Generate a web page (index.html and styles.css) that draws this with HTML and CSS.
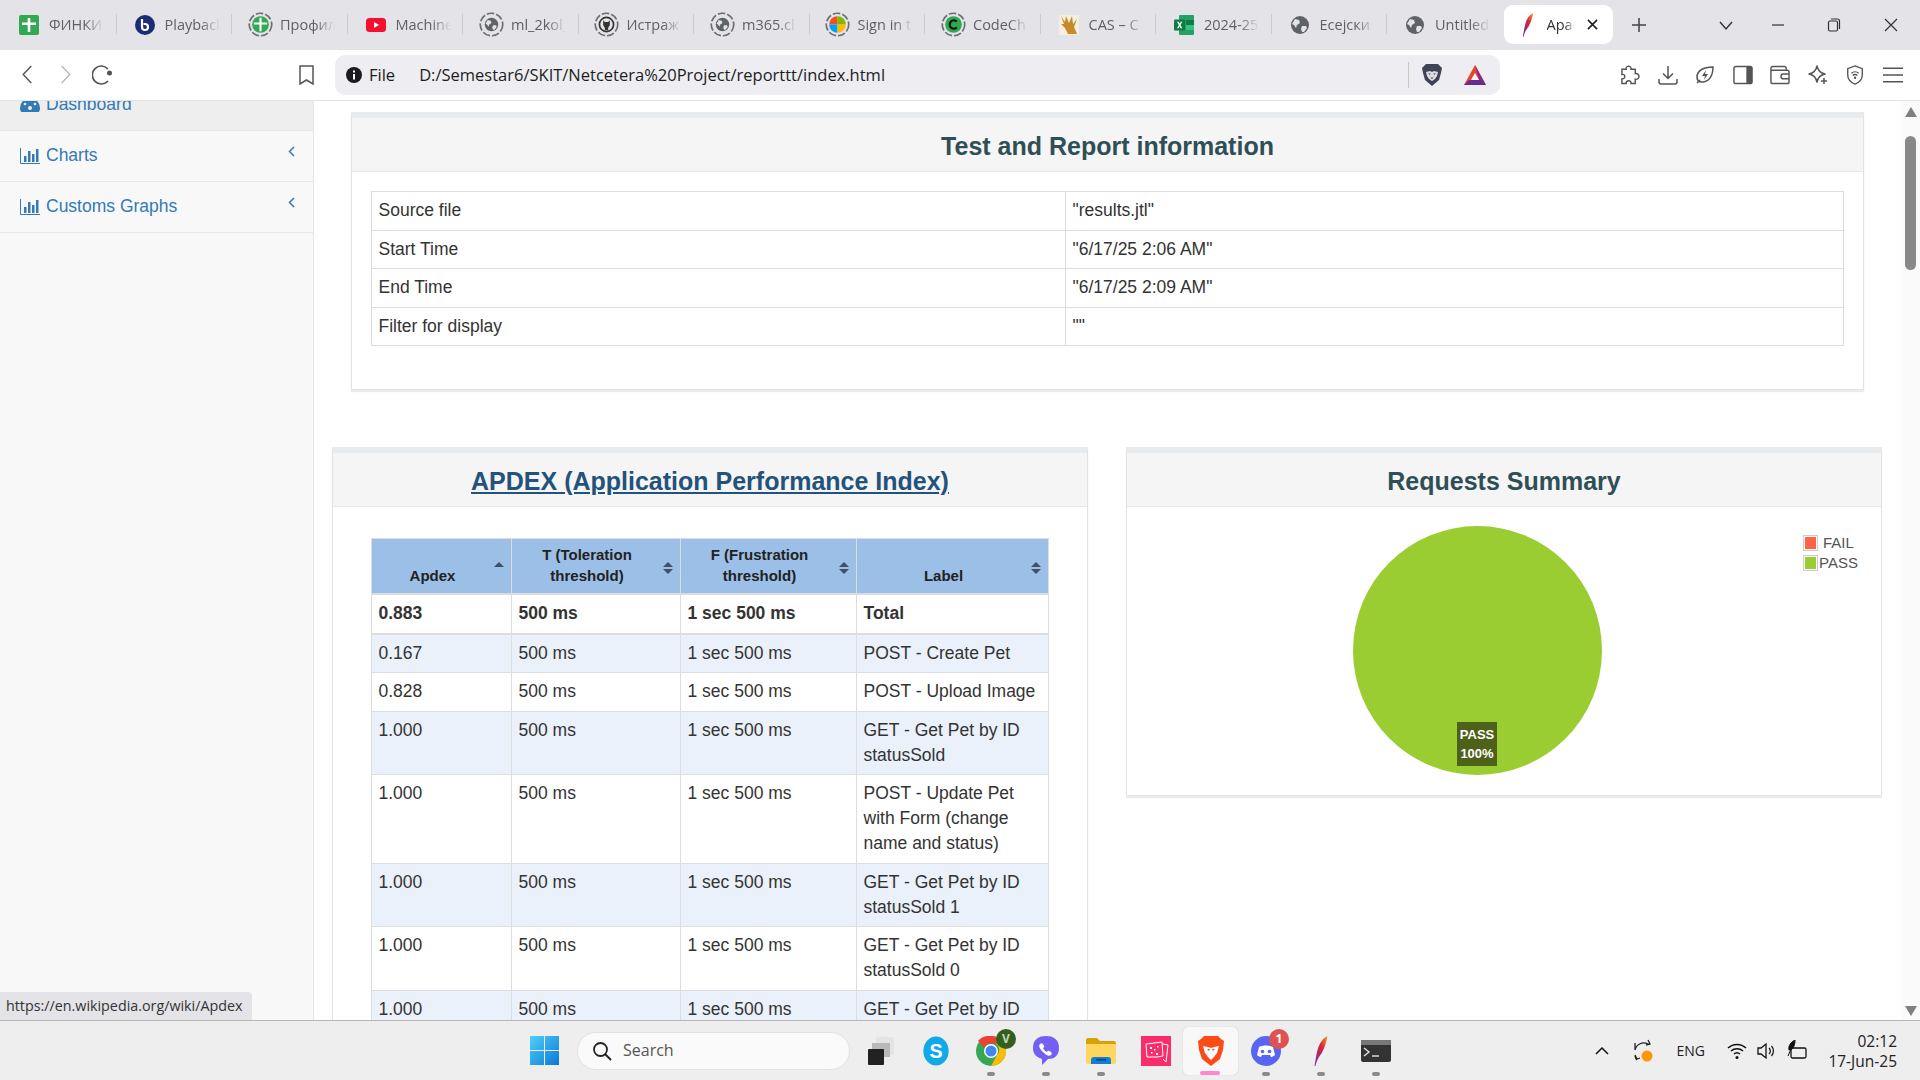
FILE: index.html
```html
<!DOCTYPE html>
<html lang="en">
  <head>
    <meta charset="UTF-8" />
    <title>Apache JMeter Dashboard</title>
    <link rel="stylesheet" href="styles.css">
  </head>

  <body>
    <!-- shared icons -->
    <svg class="defs" width="0" height="0">
      <symbol id="globe" viewBox="0 0 20 20">
        <circle cx="10" cy="10" r="9" fill="#5f6368"/>
        <path d="M5 4l4 1 1 3-3 2-1 3-2-3-2-1zM12 11l4 0 1 2-3 4-2 0-1-3z" fill="#e3e3e8"/>
      </symbol>
      <symbol id="ring" viewBox="0 0 30 30">
        <circle cx="15" cy="15" r="13.5" fill="none" stroke="#6d6d72" stroke-width="2" stroke-dasharray="9 2.5"/>
      </symbol>
      <symbol id="bars" viewBox="0 0 20 16">
        <path d="M.5 0v15.500h19.500" fill="none" stroke="#337ab7"/>
        <path d="M4 8h2.500v6H4zM8 3h2.500v11H8zM12 6h2.500v8H12zM16 1h2.500v13H16z" fill="#337ab7"/>
      </symbol>
      <symbol id="feather" viewBox="0 0 14 30">
        <defs>
          <linearGradient id="feathergrad" x1="1" y1="0" x2="0" y2="1">
            <stop offset="0" stop-color="#f7a02b"/>
            <stop offset=".4" stop-color="#d6263c"/>
            <stop offset=".8" stop-color="#8c2a86"/>
          </linearGradient>
        </defs>
        <path d="M13.500 0C9 2 5.500 7 3.500 14 2.500 18 1.500 24 .5 30l.8 0C2.500 26 3.500 23 5 21 9 16 12 9 13.500 0z" fill="url(#feathergrad)"/>
      </symbol>
    </svg>

    <header class="tabstrip">
      <div class="tab">
        <svg class="favicon" viewBox="0 0 20 20"><rect width="20" height="20" rx="2" fill="#33a852"/><path d="M8.700 3h2.600v4.500H17V10h-5.700v7H8.700v-7H3V7.500h5.700z" fill="#fff"/></svg>
        <span class="tab-title">ФИНКИ</span>
      </div>
      <div class="tab">
        <svg class="favicon" viewBox="0 0 20 20"><circle cx="10" cy="10" r="10" fill="#1c2b78"/><path d="M7 4v8a3 3 0 1 0 3-3H8.500" fill="none" stroke="#fff" stroke-width="2.200"/></svg>
        <span class="tab-title">Playback</span>
      </div>
      <div class="tab">
        <svg class="favicon favicon-ring" viewBox="0 0 30 30"><use href="#ring"/><circle cx="15" cy="15" r="10" fill="#33a852"/><path d="M13.700 7h2.600v5.500H23V15h-6.700v8h-2.600v-8H7v-2.500h6.700z" fill="#fff"/></svg>
        <span class="tab-title">Профил</span>
      </div>
      <div class="tab">
        <svg class="favicon" viewBox="0 0 20 20"><rect y="3" width="20" height="14" rx="3.500" fill="#f5102f"/><path d="M8 7l5 3-5 3z" fill="#fff"/></svg>
        <span class="tab-title">Machine</span>
      </div>
      <div class="tab">
        <svg class="favicon favicon-ring" viewBox="0 0 30 30"><use href="#ring"/><use href="#globe" x="6" y="6" width="18" height="18"/></svg>
        <span class="tab-title">ml_2kol_</span>
      </div>
      <div class="tab">
        <svg class="favicon favicon-ring" viewBox="0 0 30 30"><use href="#ring"/><circle cx="15" cy="15" r="8.500" fill="none" stroke="#333" stroke-width="2"/><path d="M11 10l2 2h4l2-2v6l-2 3v3h-4v-3l-2-3z" fill="#333"/></svg>
        <span class="tab-title">Истраж</span>
      </div>
      <div class="tab">
        <svg class="favicon favicon-ring" viewBox="0 0 30 30"><use href="#ring"/><use href="#globe" x="6" y="6" width="18" height="18"/></svg>
        <span class="tab-title">m365.cl</span>
      </div>
      <div class="tab">
        <svg class="favicon favicon-ring" viewBox="0 0 30 30"><use href="#ring"/><path d="M15 5v10H5a10 10 0 0 1 10-10z" fill="#f25022"/><path d="M15 5a10 10 0 0 1 10 10H15z" fill="#7fba00"/><path d="M15 25V15H5a10 10 0 0 0 10 10z" fill="#00a4ef"/><path d="M15 25a10 10 0 0 0 10-10H15z" fill="#ffb900"/></svg>
        <span class="tab-title">Sign in t</span>
      </div>
      <div class="tab">
        <svg class="favicon favicon-ring" viewBox="0 0 30 30"><use href="#ring"/><circle cx="15" cy="15" r="10" fill="#2fa84f"/><path d="M19 11.500a5 5 0 1 0 0 7" fill="none" stroke="#111" stroke-width="2.500"/></svg>
        <span class="tab-title">CodeCh</span>
      </div>
      <div class="tab">
        <svg class="favicon" viewBox="0 0 20 20"><rect width="20" height="20" fill="#f6efe0"/><path d="M2 1l4 6 1-6 3 7 3-7 1 8 4-5-3 8 3 7H9L6 13 2 9l3 0z" fill="#c58a2c"/></svg>
        <span class="tab-title">CAS – C</span>
      </div>
      <div class="tab">
        <svg class="favicon" viewBox="0 0 20 20"><rect x="5" y="0" width="15" height="20" rx="1" fill="#21a366"/><rect x="12" y="5" width="8" height="5" fill="#107c41"/><rect x="12" y="10" width="8" height="5" fill="#33c481"/><rect y="4.500" width="11" height="11" rx="1" fill="#0f7b40"/><path d="M3 6.800h1.700l1 2 1-2h1.600L6.500 10l1.800 3.200H6.600l-1-2-1 2H3L4.800 10z" fill="#fff"/></svg>
        <span class="tab-title">2024-25</span>
      </div>
      <div class="tab">
        <svg class="favicon" viewBox="0 0 20 20"><use href="#globe"/></svg>
        <span class="tab-title">Есејски</span>
      </div>
      <div class="tab">
        <svg class="favicon" viewBox="0 0 20 20"><use href="#globe"/></svg>
        <span class="tab-title">Untitled</span>
      </div>
      <div class="tab tab-active">
        <svg class="favicon feather-favicon" viewBox="0 0 14 30"><use href="#feather"/></svg>
        <span class="tab-title">Apache</span>
        <svg class="tab-close" viewBox="0 0 12 12"><path d="M1 1l10 10M11 1L1 11" stroke="#222" stroke-width="1.800"/></svg>
      </div>
      <svg class="new-tab" viewBox="0 0 14 14"><path d="M7 0v14M0 7h14" stroke="#444" stroke-width="1.500"/></svg>
      <div class="window-controls">
        <svg viewBox="0 0 14 14" class="win-btn"><path d="M1 4l6 7 6-7" fill="none" stroke="#333" stroke-width="1.400"/></svg>
        <svg viewBox="0 0 14 14" class="win-btn"><path d="M1 7h12" stroke="#333" stroke-width="1.200"/></svg>
        <svg viewBox="0 0 14 14" class="win-btn win-restore"><rect x="1.500" y="3" width="9" height="10" rx="1.500" fill="none" stroke="#333" stroke-width="1.200"/><path d="M4 1h6.500A2 2 0 0 1 12.500 3v8" fill="none" stroke="#333" stroke-width="1.200"/></svg>
        <svg viewBox="0 0 14 14" class="win-btn win-close"><path d="M1 1l12 12M13 1L1 13" stroke="#333" stroke-width="1.200"/></svg>
      </div>
    </header>

    <nav class="toolbar">
      <div class="nav-buttons">
        <svg class="nav-back" viewBox="0 0 10 20"><path d="M9.500 1L1 10l8.500 9" fill="none" stroke="#555" stroke-width="1.500"/></svg>
        <svg class="nav-forward" viewBox="0 0 10 20"><path d="M.5 1L9 10 .5 19" fill="none" stroke="#bbb" stroke-width="1.500"/></svg>
        <svg class="nav-reload" viewBox="0 0 21 20"><path d="M16 4A9 9 0 1 0 16 16" fill="none" stroke="#555" stroke-width="1.700"/><circle cx="17.500" cy="8" r="2.500" fill="#555"/></svg>
        <svg class="nav-bookmark" viewBox="0 0 15 20"><path d="M1 1h13v18l-6.500-4L1 19z" fill="none" stroke="#555" stroke-width="1.500"/></svg>
      </div>
      <div class="address-bar">
        <svg class="info-icon" viewBox="0 0 16 16"><circle cx="8" cy="8" r="8" fill="#1b1b1f"/><path d="M7 7h2v5.500H7zM7 3.500h2v2H7z" fill="#fff"/></svg>
        <span class="scheme">File</span>
        <span class="url">D:/Semestar6/SKIT/Netcetera%20Project/reporttt/index.html</span>
        <span class="address-sep"></span>
        <svg class="brave-shield" viewBox="0 0 20 22"><path d="M4 0h12l2 2 2 2-1 5-2 7-7 6-7-6-2-7L0 4l2-2z" fill="#3f4355"/><path d="M4 8l4-1 2 1 2-1 4 1-1 4-2 3-3 2-3-2-2-3z" fill="#dcdce2"/><path d="M6 9.500h2.500L8 11zM11.500 9.500H14L12 11zM8.500 13.500h3L10 15z" fill="#3f4355"/></svg>
        <svg class="bat-icon" viewBox="0 0 22 20"><path d="M11 0l11 20H0z" fill="#e8452a"/><path d="M11 0l11 20H11l4-5z" fill="#8a2a8a"/><path d="M0 20l5-5h12l5 5z" fill="#662d91"/><path d="M11 8l4 7H7z" fill="#fff"/></svg>
      </div>
      <div class="extensions">
        <svg viewBox="0 0 21 20"><path d="M8 1c2-1 4 1 3.500 3H16v4.500c2-.5 4 1 4 3s-2 3.500-4 3V19h-4.500c.5-2-1-3-2.500-3s-3 1-2.500 3H2v-5c2 .5 3-1 3-2.500S4 9 2 9.500V4h4.500C6 3 6.500 1.500 8 1z" fill="none" stroke="#555" stroke-width="1.500"/></svg>
        <svg viewBox="0 0 20 20"><path d="M10 1v12M5 8.500l5 5 5-5M1 14v3a2 2 0 0 0 2 2h14a2 2 0 0 0 2-2v-3" fill="none" stroke="#555" stroke-width="1.500"/></svg>
        <svg viewBox="0 0 20 20"><path d="M18 2C8 2 2 6 2 12c0 3 2 5 5 5 7 0 11-6 11-15zM2 18l3-3" fill="none" stroke="#555" stroke-width="1.500"/><path d="M11 5l-4 6h3l-1 4 4-6h-3z" fill="#555"/></svg>
        <svg viewBox="0 0 21 20"><rect x="1" y="1" width="19" height="18" rx="2" fill="none" stroke="#555" stroke-width="1.500"/><rect x="14" y="1" width="6" height="18" fill="#555"/></svg>
        <svg viewBox="0 0 21 20"><path d="M17 5V3a2 2 0 0 0-2-2H3a2 2 0 0 0-2 2v14a2 2 0 0 0 2 2h15a2 2 0 0 0 2-2V7a2 2 0 0 0-2-2H1M20 9h-6a2.500 2.500 0 0 0 0 5h6" fill="none" stroke="#555" stroke-width="1.500"/></svg>
        <svg viewBox="0 0 20 20"><path d="M9 1c1 5 3 7 8 8-5 1-7 3-8 8-1-5-3-7-8-8 5-1 7-3 8-8z" fill="none" stroke="#555" stroke-width="1.500" stroke-linejoin="round"/><path d="M16 13v6M13 16h6" stroke="#555" stroke-width="1.500"/></svg>
        <svg viewBox="0 0 20 22"><path d="M10 1l8 3v7c0 5-3 8-8 10-5-2-8-5-8-10V4z" fill="none" stroke="#555" stroke-width="1.500"/><path d="M6 9a6 6 0 0 1 8 0M7.500 11.500a3.500 3.500 0 0 1 5 0" fill="none" stroke="#555" stroke-width="1.400"/><circle cx="10" cy="14" r="1.300" fill="#555"/></svg>
        <svg viewBox="0 0 21 16"><path d="M0 1h21M0 8h21M0 15h21" stroke="#555" stroke-width="1.500"/></svg>
      </div>
    </nav>

    <div class="viewport">
      <aside class="sidebar">
        <ul class="side-menu">
          <li class="side-item side-item-active">
            <svg class="side-icon" viewBox="0 0 20 16"><path d="M10 1a10 10 0 0 0-10 10c0 2 .5 3.500 1.500 4h17c1-.5 1.500-2 1.500-4A10 10 0 0 0 10 1z" fill="#337ab7"/><circle cx="10" cy="11" r="2" fill="#eee"/><circle cx="5" cy="7" r="1.300" fill="#eee"/><circle cx="15" cy="7" r="1.300" fill="#eee"/></svg>
            <a href="#">Dashboard</a>
          </li>
          <li class="side-item">
            <svg class="side-icon"><use href="#bars"/></svg>
            <a href="#">Charts</a>
            <svg class="side-arrow" viewBox="0 0 7 11"><path d="M6 1L1.500 5.500 6 10" fill="none" stroke="#337ab7" stroke-width="1.500"/></svg>
          </li>
          <li class="side-item">
            <svg class="side-icon"><use href="#bars"/></svg>
            <a href="#">Customs Graphs</a>
            <svg class="side-arrow" viewBox="0 0 7 11"><path d="M6 1L1.500 5.500 6 10" fill="none" stroke="#337ab7" stroke-width="1.500"/></svg>
          </li>
        </ul>
      </aside>

      <main class="page">
        <section class="panel panel-info">
          <div class="panel-heading"><h3>Test and Report information</h3></div>
          <div class="panel-body">
            <table class="table info-table">
              <colgroup><col class="col-key"><col></colgroup>
              <tbody>
                <tr><td>Source file</td><td>"results.jtl"</td></tr>
                <tr><td>Start Time</td><td>"6/17/25 2:06 AM"</td></tr>
                <tr><td>End Time</td><td>"6/17/25 2:09 AM"</td></tr>
                <tr><td>Filter for display</td><td>""</td></tr>
              </tbody>
            </table>
          </div>
        </section>

        <div class="panel-row">
          <section class="panel">
            <div class="panel-heading"><h3><a href="#">APDEX (Application Performance Index)</a></h3></div>
            <div class="panel-body apdex-body">
              <table class="table apdex-table">
                <colgroup><col class="col-apdex"><col class="col-t"><col class="col-f"><col></colgroup>
                <thead>
                  <tr>
                    <th class="sort-up">Apdex</th>
                    <th class="sort-both">T (Toleration threshold)</th>
                    <th class="sort-both">F (Frustration threshold)</th>
                    <th class="sort-both">Label</th>
                  </tr>
                </thead>
                <tbody>
                  <tr class="total-row"><td>0.883</td><td>500 ms</td><td>1 sec 500 ms</td><td>Total</td></tr>
                  <tr class="odd"><td>0.167</td><td>500 ms</td><td>1 sec 500 ms</td><td>POST - Create Pet</td></tr>
                  <tr><td>0.828</td><td>500 ms</td><td>1 sec 500 ms</td><td>POST - Upload Image</td></tr>
                  <tr class="odd"><td>1.000</td><td>500 ms</td><td>1 sec 500 ms</td><td>GET - Get Pet by ID statusSold</td></tr>
                  <tr><td>1.000</td><td>500 ms</td><td>1 sec 500 ms</td><td>POST - Update Pet with Form (change name and status)</td></tr>
                  <tr class="odd"><td>1.000</td><td>500 ms</td><td>1 sec 500 ms</td><td>GET - Get Pet by ID statusSold 1</td></tr>
                  <tr><td>1.000</td><td>500 ms</td><td>1 sec 500 ms</td><td>GET - Get Pet by ID statusSold 0</td></tr>
                  <tr class="odd"><td>1.000</td><td>500 ms</td><td>1 sec 500 ms</td><td>GET - Get Pet by ID</td></tr>
                </tbody>
              </table>
            </div>
          </section>

          <section class="panel">
            <div class="panel-heading"><h3>Requests Summary</h3></div>
            <div class="chart">
              <div class="pie">
                <div class="pie-label">PASS<br>100%</div>
              </div>
              <div class="legend">
                <span class="swatch swatch-fail"></span><span class="legend-text">FAIL</span>
                <span class="swatch swatch-pass"></span><span class="legend-text">PASS</span>
              </div>
            </div>
          </section>
        </div>
      </main>

      <div class="scrollbar">
        <span class="scroll-up"></span>
        <span class="scroll-thumb"></span>
        <span class="scroll-down"></span>
      </div>

      <div class="status-bubble">https://en.wikipedia.org/wiki/Apdex</div>
    </div>

    <footer class="taskbar">
      <svg class="win-logo" viewBox="0 0 29 29">
        <defs>
          <linearGradient id="wingrad" x1="0" y1="0" x2="1" y2="1">
            <stop offset="0" stop-color="#4fd0fb"/>
            <stop offset="1" stop-color="#0a78d6"/>
          </linearGradient>
        </defs>
        <path d="M0 0h14v14H0zM15 0h14v14H15zM0 15h14v14H0zM15 15h14v14H15z" fill="url(#wingrad)"/>
      </svg>
      <div class="search-box">
        <svg viewBox="0 0 20 20"><circle cx="8.500" cy="8.500" r="6.500" fill="none" stroke="#222" stroke-width="1.800"/><path d="M13 13l6 6" stroke="#222" stroke-width="2"/></svg>
        <span>Search</span>
      </div>
      <div class="task-apps">
        <div class="task-slot">
          <svg viewBox="0 0 30 30"><rect x="10" y="1" width="18" height="18" rx="2" fill="#e4e4e4"/><rect x="6" y="7" width="18" height="14" fill="#b9b9b9"/><rect x="2" y="13" width="16" height="16" rx="1" fill="#222"/></svg>
        </div>
        <div class="task-slot">
          <svg viewBox="0 0 28 32"><ellipse cx="14" cy="16" rx="13.500" ry="15.500" fill="#11a9e8"/><text x="14" y="23" text-anchor="middle" class="skype-s">S</text></svg>
        </div>
        <div class="task-slot is-open">
          <svg viewBox="0 0 30 30"><circle cx="15" cy="15" r="15" fill="#34a853"/><path d="M15 0a15 15 0 0 1 13 7.500H15A7.500 7.500 0 0 0 8 12L2 5A15 15 0 0 1 15 0z" fill="#ea4335"/><path d="M28 7.500A15 15 0 0 1 15 30l6-11a7.500 7.500 0 0 0-1-11.500z" fill="#fbbc04"/><circle cx="15" cy="15" r="7" fill="#fff"/><circle cx="15" cy="15" r="5.500" fill="#4285f4"/></svg>
          <span class="app-badge badge-green">V</span>
        </div>
        <div class="task-slot is-open">
          <svg viewBox="0 0 26 30"><path d="M13 0c7 0 13 3 13 12 0 8-5 11-11 11l-6 6v-6C3 21 0 18 0 12 0 3 6 0 13 0z" fill="#7360f2"/><path d="M7 8c1-1 2-1 3 0l1 2c.500 1 0 1.500-1 2 1 2 2 3 4 4 .5-1 1-1.500 2-1l2 1c1 1 1 2 0 3-2 2-5 0-8-3S5 10 7 8z" fill="#fff"/></svg>
        </div>
        <div class="task-slot is-open">
          <svg viewBox="0 0 30 26"><path d="M0 2a2 2 0 0 1 2-2h9l3 3h14a2 2 0 0 1 2 2v4H0z" fill="#d9a008"/><path d="M0 6h30v18a2 2 0 0 1-2 2H2a2 2 0 0 1-2-2z" fill="#ffd75e"/><path d="M5 26v-4a3 3 0 0 1 3-3h14a3 3 0 0 1 3 3v4z" fill="#0f7fd6"/><rect x="10" y="21" width="10" height="1.500" fill="#063e7a"/></svg>
        </div>
        <div class="task-slot">
          <svg viewBox="0 0 30 30"><rect width="30" height="30" fill="#f92d6a"/><path d="M5 8l16-2 1 14-6 1H6zM22 8l5 1-2 17-3-3" fill="none" stroke="#fff" stroke-width="1"/><path d="M9 11h2v2H9zM13 13h1.500v1.500H13zM10 16h1.500v1.500H10zM16 10h1.500v1.500H16zM15 17h2v2h-2z" fill="#fff"/></svg>
        </div>
        <div class="task-slot is-active">
          <svg viewBox="0 0 26 30"><path d="M6 0h14l3 3 3 2-1 9-3 9-9 7-9-7-3-9L0 5l3-2z" fill="#fb4b16"/><path d="M5 10l5 1 3 1 3-1 5-1-2 7-3 4-3 3-3-3-3-4z" fill="#fff"/><path d="M9 13h3l-1 2zM14 13h3l-2 2z" fill="#fb4b16"/></svg>
        </div>
        <div class="task-slot is-open">
          <svg viewBox="0 0 30 30"><circle cx="15" cy="15" r="15" fill="#5865f2"/><path d="M8 11c4-2 10-2 14 0l2 8c-2 1.500-3 2-4 2l-1-2H11l-1 2c-1 0-2-.5-4-2z" fill="#fff"/><circle cx="11.500" cy="15.500" r="1.800" fill="#5865f2"/><circle cx="18.500" cy="15.500" r="1.800" fill="#5865f2"/></svg>
          <span class="app-badge badge-red">1</span>
        </div>
        <div class="task-slot is-open">
          <svg class="task-feather" viewBox="0 0 14 30"><use href="#feather"/></svg>
        </div>
        <div class="task-slot is-open">
          <svg viewBox="0 0 30 22"><rect width="30" height="22" rx="2" fill="#333"/><rect width="30" height="5" fill="#777"/><path d="M3 8l5 4-5 4" fill="none" stroke="#ddd" stroke-width="1.500"/><path d="M11 16h7" stroke="#ddd" stroke-width="1.500"/></svg>
        </div>
      </div>
      <div class="tray">
        <svg class="tray-chevron" viewBox="0 0 14 9"><path d="M1 8l6-6 6 6" fill="none" stroke="#111" stroke-width="1.500"/></svg>
        <svg class="tray-sync" viewBox="0 0 22 24"><path d="M16 5A9 9 0 0 0 3 11M3 4v7h0M5 21a9 9 0 0 1-2-4M16 1l2 4-4 1M3 16l2 4 3-1" fill="none" stroke="#222" stroke-width="1.300"/><circle cx="15" cy="17" r="5.500" fill="#ff9800"/></svg>
        <span class="tray-lang">ENG</span>
        <svg class="tray-wifi" viewBox="0 0 20 18"><path d="M1 6a13 13 0 0 1 18 0M4 9a9 9 0 0 1 12 0M7 12a4.500 4.500 0 0 1 6 0" fill="none" stroke="#111" stroke-width="1.500"/><circle cx="10" cy="15.500" r="1.500" fill="#111"/></svg>
        <svg class="tray-sound" viewBox="0 0 20 18"><path d="M1 6h3l5-4v14l-5-4H1z" fill="none" stroke="#111" stroke-width="1.300"/><path d="M12 6a4 4 0 0 1 0 6M14.500 4a7.500 7.500 0 0 1 0 10" fill="none" stroke="#111" stroke-width="1.200"/></svg>
        <svg class="tray-power" viewBox="0 0 22 22"><rect x="5" y="8" width="15" height="10" rx="1.500" fill="none" stroke="#111" stroke-width="1.300"/><path d="M9 0C5 2 2 6 3 10c3 0 6-3 6-10zM2 16l3-7" fill="#111" stroke="#111"/></svg>
        <div class="clock">
          <span>02:12</span>
          <span>17-Jun-25</span>
        </div>
      </div>
    </footer>
  </body>
</html>
```

FILE: styles.css
```css
* {
  box-sizing: border-box;
}

html,
body {
  margin: 0;
  padding: 0;
  height: 100%;
}

body {
  display: flex;
  flex-direction: column;
  height: 1080px;
  overflow: hidden;
  font-family: "Liberation Sans", Arial, sans-serif;
  font-size: 17.5px;
  line-height: 25px;
  color: #333;
  background-color: #fff;
}

.defs {
  position: absolute;
}

/* browser tabs */
.tabstrip {
  display: flex;
  align-items: center;
  flex: 0 0 50px;
  padding-left: 2px;
  background-color: #e3e3e8;
  font-family: "Open Sans", sans-serif;
}

.tab {
  display: flex;
  align-items: center;
  position: relative;
  flex: 0 0 115.500px;
  height: 39px;
  margin-top: -1px;
  padding-left: 17px;
  overflow: hidden;
}

.tab::after {
  content: "";
  position: absolute;
  top: 9px;
  right: 1px;
  width: 1px;
  height: 20px;
  background-color: #c9c9ce;
}

.favicon {
  flex: 0 0 20px;
  width: 20px;
  height: 20px;
}

.favicon-ring {
  flex: 0 0 25px;
  width: 25px;
  height: 25px;
  margin: 0 -2.500px;
}

.tab-title {
  width: 55px;
  margin-left: 10px;
  overflow: hidden;
  white-space: nowrap;
  font-size: 14.500px;
  color: #5f5f64;
  -webkit-mask-image: linear-gradient(to right, #000 65%, transparent 100%);
  mask-image: linear-gradient(to right, #000 65%, transparent 100%);
}

.tab:nth-child(13)::after {
  display: none;
}

.tab-active {
  flex: 0 0 109px;
  border-radius: 9px;
  background-color: #fff;
}

.tab-active::after {
  display: none;
}

.tab-active .tab-title {
  width: 28px;
  margin-left: 12px;
  color: #333;
}

.feather-favicon {
  flex: 0 0 14px;
  width: 14px;
  height: 24px;
}

.tab-close {
  width: 11px;
  height: 11px;
  margin-left: 12px;
}

.new-tab {
  width: 14px;
  height: 14px;
  margin-left: 19px;
}

.window-controls {
  display: flex;
  align-items: center;
  gap: 38px;
  margin-left: 73px;
}

.win-btn {
  width: 14px;
  height: 14px;
}

.win-restore {
  margin-left: 4px;
}

.win-close {
  margin-left: 5px;
}

/* address bar row */
.toolbar {
  display: flex;
  align-items: center;
  flex: 0 0 51px;
  padding-bottom: 1px;
  border-bottom: 1px solid #e3e3e3;
  background-color: #fff;
}

.nav-buttons {
  display: flex;
  align-items: center;
  width: 335px;
  padding-left: 22px;
}

.nav-back,
.nav-forward {
  width: 10px;
  height: 19px;
}

.nav-forward {
  margin-left: 29px;
}

.nav-reload {
  width: 21px;
  height: 20px;
  margin-left: 21px;
}

.nav-bookmark {
  width: 15px;
  height: 20px;
  margin-left: 186px;
}

.address-bar {
  display: flex;
  align-items: center;
  width: 1165px;
  height: 40px;
  padding-left: 11px;
  border-radius: 10px;
  background-color: #ededf2;
  font-family: "Open Sans", sans-serif;
  font-size: 16.500px;
  color: #1d1d21;
}

.info-icon {
  width: 16px;
  height: 16px;
}

.scheme {
  margin-left: 7px;
}

.url {
  margin-left: 24px;
}

.address-sep {
  width: 1px;
  height: 26px;
  margin-left: auto;
  background-color: #c8c8cc;
}

.brave-shield {
  width: 20px;
  height: 22px;
  margin-left: 13px;
}

.bat-icon {
  width: 22px;
  height: 20px;
  margin-left: 22px;
  margin-right: 14px;
}

.extensions {
  display: flex;
  align-items: center;
  gap: 17.500px;
  margin-left: 120px;
}

.extensions svg {
  width: 20px;
  height: 20px;
}

/* page area, scrolled down a little */
.viewport {
  display: flex;
  position: relative;
  flex: 1;
  min-height: 0;
  overflow: hidden;
}

.sidebar {
  flex: 0 0 314px;
  border-right: 1px solid #e7e7e7;
  background-color: #f8f8f8;
}

.side-menu {
  margin: -21.500px 0 0;
  padding: 0;
  list-style: none;
}

.side-item {
  display: flex;
  align-items: center;
  position: relative;
  height: 51px;
  padding-left: 20px;
  border-bottom: 1px solid #e7e7e7;
}

.side-item-active {
  background-color: #eee;
}

.side-item a {
  color: #337ab7;
  text-decoration: none;
}

.side-icon {
  flex: 0 0 20px;
  width: 20px;
  height: 16px;
  margin-right: 6px;
}

.side-arrow {
  position: absolute;
  top: 15px;
  right: 18px;
  width: 7px;
  height: 11px;
}

.page {
  flex: 1;
  min-width: 0;
  padding: 11px 19px 0 18px;
  overflow: hidden;
}

.panel {
  border: 1px solid #e3e3e3;
  border-top: 6px solid #e8ebee;
  box-shadow: 0 2px 1px rgba(0, 0, 0, 0.08);
  background-color: #fff;
}

.panel-info {
  margin: 0 18px 57px 19px;
}

.panel-row {
  display: grid;
  grid-template-columns: 756px 756px;
  column-gap: 38px;
  align-items: start;
}

.panel-heading {
  height: 54px;
  padding-top: 1px;
  border-bottom: 1px solid #e7e7e7;
  background-color: #f5f5f5;
}

.panel-heading h3 {
  margin: 0;
  font-size: 25px;
  line-height: 54px;
  font-weight: bold;
  text-align: center;
  color: #2f4f56;
}

.panel-heading a {
  color: #23527c;
}

.panel-body {
  padding: 19px 19px 43px;
}

.apdex-body {
  padding: 31px 38px 0;
}

/* tables */
.table {
  width: 100%;
  table-layout: fixed;
  border-collapse: collapse;
}

.table td,
.table th {
  padding: 6.250px 6.500px;
  border: 1px solid #ddd;
  vertical-align: top;
}

.col-key {
  width: 694px;
}

.col-apdex {
  width: 140px;
}

.col-t {
  width: 169px;
}

.col-f {
  width: 176px;
}

.apdex-table thead th {
  position: relative;
  padding: 5px 25px 7px 7px;
  border-bottom: 2px solid #ddd;
  background-color: #9bbfe6;
  font-size: 15px;
  line-height: 21px;
  text-align: center;
  vertical-align: bottom;
  color: #222;
}

.sort-up::after,
.sort-both::after {
  content: "";
  position: absolute;
  top: 23px;
  right: 7px;
  border-left: 5px solid transparent;
  border-right: 5px solid transparent;
  border-bottom: 5px solid #3f5163;
}

.sort-both::before {
  content: "";
  position: absolute;
  top: 30px;
  right: 7px;
  border-left: 5px solid transparent;
  border-right: 5px solid transparent;
  border-top: 5px solid #3f5163;
}

.total-row td {
  border-bottom-width: 2px;
  font-weight: bold;
}

.odd td {
  background-color: #eaf1fa;
}

/* pie chart */
.chart {
  position: relative;
  height: 288px;
  padding: 19px 0 0 226px;
}

.pie {
  position: relative;
  width: 249px;
  height: 249px;
  border-radius: 50%;
  background-color: #9acd32;
}

.pie-label {
  position: absolute;
  left: 104px;
  top: 196px;
  width: 40px;
  height: 44px;
  background-color: #4d6119;
  font-size: 13px;
  font-weight: bold;
  line-height: 19px;
  padding-top: 3px;
  text-align: center;
  color: #fff;
}

.legend {
  display: grid;
  grid-template-columns: 15px auto;
  row-gap: 4px;
  position: absolute;
  top: 28px;
  left: 676px;
  font-size: 15px;
  line-height: 16px;
  color: #545454;
}

.legend-text {
  padding-left: 1px;
  text-align: center;
}

.swatch {
  width: 15px;
  height: 16px;
  border: 1px solid #ccc;
  padding: 1px;
  background-clip: content-box;
}

.swatch-fail {
  background-color: #ff6347;
}

.swatch-pass {
  background-color: #9acd32;
}

/* scrollbar */
.scrollbar {
  display: flex;
  flex-direction: column;
  align-items: center;
  flex: 0 0 19px;
  padding-top: 6px;
  background-color: #fafafa;
}

.scroll-up {
  border-left: 6.500px solid transparent;
  border-right: 6.500px solid transparent;
  border-bottom: 10px solid #808080;
}

.scroll-thumb {
  width: 11px;
  height: 134px;
  margin-top: 19px;
  border-radius: 6px;
  background-color: #888;
}

.scroll-down {
  margin-top: auto;
  margin-bottom: 4px;
  border-left: 6.500px solid transparent;
  border-right: 6.500px solid transparent;
  border-top: 10px solid #808080;
}

.status-bubble {
  position: absolute;
  left: 0;
  bottom: 0;
  width: 252px;
  height: 28px;
  padding-left: 6px;
  border-top-right-radius: 4px;
  background-color: #e3e3e8;
  font-family: "Open Sans", sans-serif;
  font-size: 14.300px;
  line-height: 28px;
  white-space: nowrap;
  color: #333;
}

/* windows taskbar */
.taskbar {
  display: flex;
  align-items: center;
  flex: 0 0 60px;
  padding-left: 530px;
  border-top: 1px solid #b5b5b5;
  background-color: #eee;
  font-family: "Open Sans", sans-serif;
}

.win-logo {
  width: 29px;
  height: 29px;
}

.search-box {
  display: flex;
  align-items: center;
  width: 273px;
  height: 38px;
  margin-left: 18px;
  padding-left: 14px;
  border: 1px solid #e2e2e2;
  border-radius: 19px;
  background-color: #fafafa;
  font-size: 16px;
  color: #555;
}

.search-box svg {
  width: 20px;
  height: 22px;
  margin-right: 11px;
}

.task-apps {
  display: flex;
  margin-left: 3px;
}

.task-slot {
  display: flex;
  align-items: center;
  justify-content: center;
  position: relative;
  width: 55px;
  height: 48px;
}

.task-slot svg {
  width: 30px;
  height: 30px;
}

.task-slot svg.task-feather {
  width: 14px;
}

.is-open::after {
  content: "";
  position: absolute;
  left: 24px;
  bottom: -1px;
  width: 8px;
  height: 4px;
  border-radius: 2px;
  background-color: #8a8a8a;
}

.is-active {
  border-radius: 5px;
  background-color: #f8f8f8;
  box-shadow: 0 0 1px rgba(0, 0, 0, 0.25);
}

.is-active::after {
  content: "";
  position: absolute;
  left: 17px;
  bottom: 0;
  width: 20px;
  height: 4px;
  border-radius: 2px;
  background-color: #ff86d0;
}

.app-badge {
  position: absolute;
  width: 20px;
  height: 20px;
  border-radius: 50%;
  font-size: 12px;
  line-height: 20px;
  font-weight: bold;
  text-align: center;
  color: #fff;
}

.badge-green {
  top: 2px;
  left: 33px;
  background-color: #33601d;
  color: #c7d4b8;
}

.badge-red {
  top: 2px;
  left: 31px;
  background-color: #e05252;
}

.skype-s {
  font-family: "Liberation Sans", sans-serif;
  font-size: 21px;
  font-weight: bold;
  fill: #fff;
}

.tray {
  display: flex;
  align-items: center;
  margin-left: auto;
  padding-right: 23px;
  font-size: 14px;
  color: #222;
}

.tray-chevron {
  width: 14px;
  height: 9px;
}

.tray-sync {
  width: 22px;
  height: 24px;
  margin-left: 23px;
}

.tray-lang {
  margin-left: 22.500px;
}

.tray-wifi {
  width: 20px;
  height: 18px;
  margin-left: 22px;
}

.tray-sound {
  width: 20px;
  height: 18px;
  margin-left: 10.500px;
}

.tray-power {
  width: 22px;
  height: 22px;
  margin-left: 8.500px;
}

.clock {
  display: flex;
  flex-direction: column;
  align-items: flex-end;
  margin-left: 20.500px;
  font-size: 15.500px;
  line-height: 20px;
}
```
